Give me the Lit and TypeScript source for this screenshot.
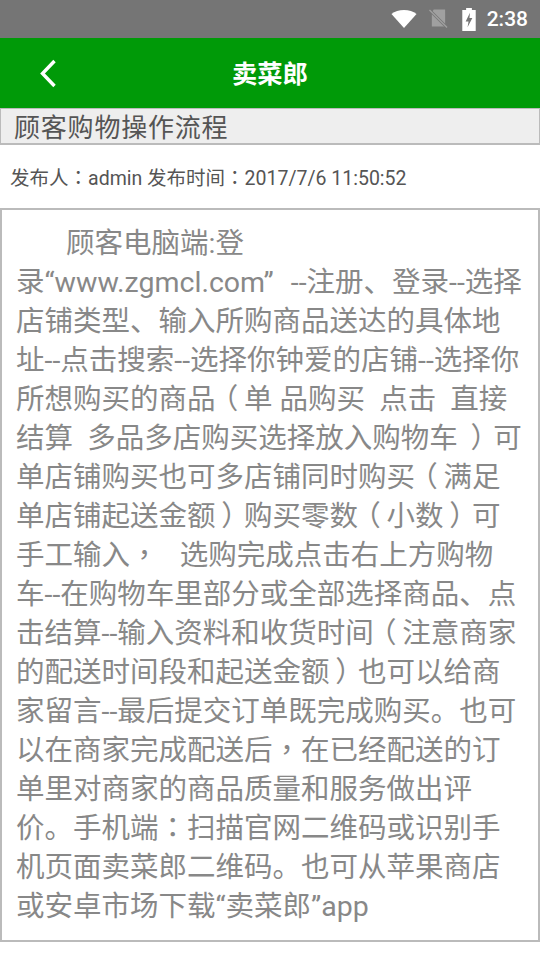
import { LitElement, html, css } from "lit";
import { customElement } from "lit/decorators.js";

const LINES = [
  "录“www.zgmcl.com”  \u200A--注册、登录--选择",
  "店铺类型、输入所购商品送达的具体地",
  "址--点击搜索--选择你钟爱的店铺--选择你",
  "所想购买的商品（单 品购买  点击  直接",
  "结算  多品多店购买选择放入购物车 ）可",
  "单店铺购买也可多店铺同时购买（满足",
  "单店铺起送金额）购买零数（小数）可",
  "手工输入，   选购完成点击右上方购物",
  "车--在购物车里部分或全部选择商品、点",
  "击结算--输入资料和收货时间（注意商家",
  "的配送时间段和起送金额）也可以给商",
  "家留言--最后提交订单既完成购买。也可",
  "以在商家完成配送后，在已经配送的订",
  "单里对商家的商品质量和服务做出评",
  "价。手机端：扫描官网二维码或识别手",
  "机页面卖菜郎二维码。也可从苹果商店",
  "或安卓市场下载“卖菜郎”app",
];

// Full-width punctuation sits nearer the middle of its box in the reference.
const punct = (text: string) =>
  text.split(/([，：（）])/).map((part) => {
    if (part === "（") return html`<span class="tc open">${part}</span>`;
    if (part === "）") return html`<span class="tc close">${part}</span>`;
    if (part === "，" || part === "：") return html`<span class="tc">${part}</span>`;
    return part;
  });

@customElement("app-root")
export class AppRoot extends LitElement {
  static styles = css`
    :host {
      display: block;
      width: 540px;
      height: 960px;
      overflow: hidden;
      background: #fff;
      font-family: Roboto, "Noto Sans CJK SC", sans-serif;
    }
    .tc {
      font-family: "Noto Sans CJK TC", sans-serif;
      line-height: 0;
    }
    .open { font-feature-settings: "halt"; padding: 0 0.2em 0 0.3em; }
    .close { font-feature-settings: "halt"; padding: 0 0.3em 0 0.2em; }
    .status {
      height: 38px;
      background: #757575;
      display: flex;
      align-items: center;
      justify-content: flex-end;
      padding-right: 12px;
      color: #fff;
      font-size: 21px;
      font-weight: 500;
      box-sizing: border-box;
    }
    .status svg { display: block; }
    .wifi { margin-right: 12px; }
    .sim { margin-right: 14px; }
    .batt { margin-right: 11px; }
    .header {
      height: 70px;
      background: #009a08;
      display: flex;
      align-items: center;
      justify-content: center;
      position: relative;
      color: #fff;
      font-size: 25.3px;
      font-weight: 700;
    }
    .header span { position: relative; top: -1px; }
    .back { position: absolute; left: 39px; top: 19px; }
    .title {
      height: 37px;
      box-sizing: border-box;
      background: #eeeeee;
      border: 1px solid #bbbbbb;
      border-bottom-width: 2px;
      padding-left: 13px;
      font-size: 26px;
      line-height: 38px;
      color: #555;
      letter-spacing: 0.8px;
      white-space: nowrap;
    }
    .meta {
      height: 63px;
      box-sizing: border-box;
      padding: 20px 0 0 10px;
      font-size: 19.5px;
      line-height: 28px;
      color: #555;
      white-space: nowrap;
    }
    .body {
      box-sizing: border-box;
      height: 734px;
      border: 2px solid #bbbbbb;
      padding: 14px 0 0 14px;
      font-size: 28.5px;
      color: #888888;
    }
    .line { height: 39px; line-height: 39px; white-space: pre; }
    .first { padding-left: 50px; }
  `;

  render() {
    return html`
      <div class="status">
        <svg class="wifi" width="26" height="18" viewBox="0 0 28 20" preserveAspectRatio="none"><path d="M14 20 L0.5 4.5 C4 1.6 8.8 0 14 0 C19.2 0 24 1.6 27.5 4.5 Z" fill="#fff"/></svg>
        <svg class="sim" width="19" height="20" viewBox="0 0 20 20">
          <path d="M5 0 H17 V18 H3 V3 Z" fill="#a0a0a0"/>
          <path d="M0 0 L19 19" stroke="#757575" stroke-width="3"/>
          <path d="M0.5 0.5 L19 19" stroke="#a0a0a0" stroke-width="1.4"/>
        </svg>
        <svg class="batt" width="14" height="23" viewBox="0 0 14 24">
          <path d="M4 0 H10 V2 H14 V24 H0 V2 H4 Z" fill="#fff"/>
          <path d="M8 5 L3.5 14 H6.5 L5.5 20 L10.5 10.5 H7.5 Z" fill="#757575"/>
        </svg>
        <span>2:38</span>
      </div>
      <div class="header">
        <svg class="back" width="20" height="32" viewBox="0 0 20 32"><path d="M15.5 4 L3.5 16.5 L15.5 29" fill="none" stroke="#fff" stroke-width="3.4"/></svg>
        <span>卖菜郎</span>
      </div>
      <div class="title">顾客购物操作流程</div>
      <div class="meta">${punct("发布人：admin 发布时间：2017/7/6 11:50:52")}</div>
      <div class="body">
        <div class="line first">顾客电脑端:登</div>
        ${LINES.map((l) => html`<div class="line">${punct(l)}</div>`)}
      </div>
    `;
  }
}
